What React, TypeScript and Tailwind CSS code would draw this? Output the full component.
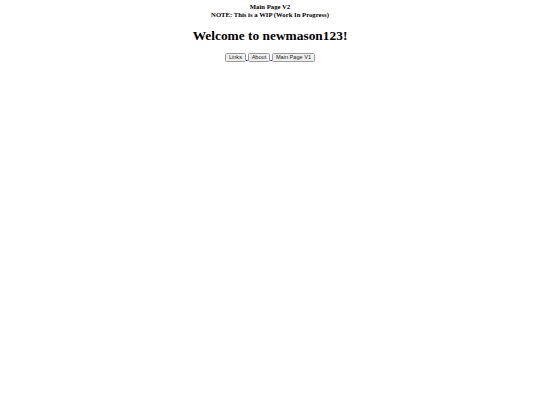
export default function App() {
  const btn =
    "inline-flex items-center justify-center align-middle h-[9px] px-[3px] border-[0.8px] border-[#9a9a9a] rounded-[1.5px] bg-[#efefef] text-[5.6px] leading-none text-[#222] font-['Liberation_Sans',Arial,sans-serif]";

  return (
    <div className="min-h-screen bg-white px-[3.4px] pt-[3.4px] text-center text-black font-['Liberation_Serif','Times_New_Roman',serif] text-[6.7px] leading-[7.7px]">
      <div className="font-bold">
        Main Page V2
        <br />
        NOTE: This is a WIP (Work In Progress)
      </div>

      <h1 className="my-[9px] text-[13.4px] leading-[15.4px] font-bold">
        Welcome to newmason123!
      </h1>

      <div className="leading-[10px]">
        <a href="#" className="underline decoration-[#0000ee] text-[#0000ee]">
          <button className={btn}>Links</button>{" "}
        </a>
        <a href="#" className="underline decoration-[#551a8b] text-[#551a8b]">
          <button className={btn}>About</button>{" "}
        </a>
        <a href="#" className="underline text-[#0000ee]">
          <button className={btn}>Main Page V1</button>
        </a>
      </div>
    </div>
  );
}
